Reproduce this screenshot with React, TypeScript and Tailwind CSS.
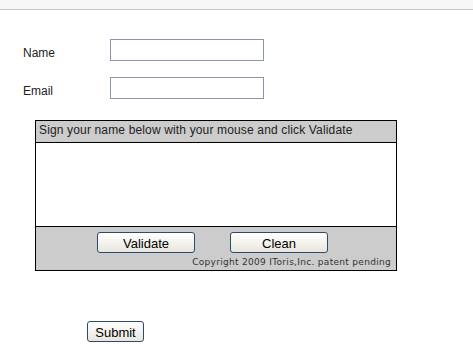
export default function App() {
  const btn =
    "h-[21px] pt-[2px] rounded-[3px] border border-[#2c4a6e] bg-gradient-to-b from-white to-[#e8e6dc] text-[13px] leading-none text-black";

  return (
    <div className="w-[473px] h-[344px] bg-white overflow-hidden font-['Liberation_Sans',Arial,sans-serif] text-[12px] text-[#222]">
      <div className="h-[10px] bg-[#f7f7f7] border-b border-[#c8c8c8]" />

      <div className="pt-[29px] flex flex-col gap-[16px]">
        <div className="flex items-center h-[22px]">
          <label className="w-[110px] pl-[23px] pt-[6px]">Name</label>
          <input className="w-[154px] h-[22px] border border-[#8a98aa] bg-white outline-none" />
        </div>
        <div className="flex items-center h-[22px]">
          <label className="w-[110px] pl-[23px] pt-[6px]">Email</label>
          <input className="w-[154px] h-[22px] border border-[#8a98aa] bg-white outline-none" />
        </div>
      </div>

      <div className="ml-[35px] mt-[21px] w-[362px] h-[151px] border border-black bg-[#cccccc] flex flex-col">
        <div className="h-[22px] border-b border-black pl-[3px] pt-[1px] text-[12px] leading-[16px] tracking-[0.15px] text-[#222]">
          Sign your name below with your mouse and click Validate
        </div>
        <div className="h-[84px] bg-white border-b border-black" />
        <div className="flex-1 flex flex-col">
          <div className="flex pt-[5px] pl-[61px] gap-[35px]">
            <button className={`${btn} w-[98px]`}>Validate</button>
            <button className={`${btn} w-[98px]`}>Clean</button>
          </div>
          <div className="text-right pr-[5px] pt-[4px] font-['DejaVu_Sans',sans-serif] font-normal text-[9px] leading-[11px] tracking-[0.3px] text-[#333]">
            Copyright 2009 IToris,Inc. patent pending
          </div>
        </div>
      </div>

      <div className="pl-[87px] pt-[50px]">
        <button className={`${btn} w-[57px] h-[19px] pt-[1px]`}>Submit</button>
      </div>
      <div className="mt-[2px] h-[2px] bg-black" />
    </div>
  );
}
